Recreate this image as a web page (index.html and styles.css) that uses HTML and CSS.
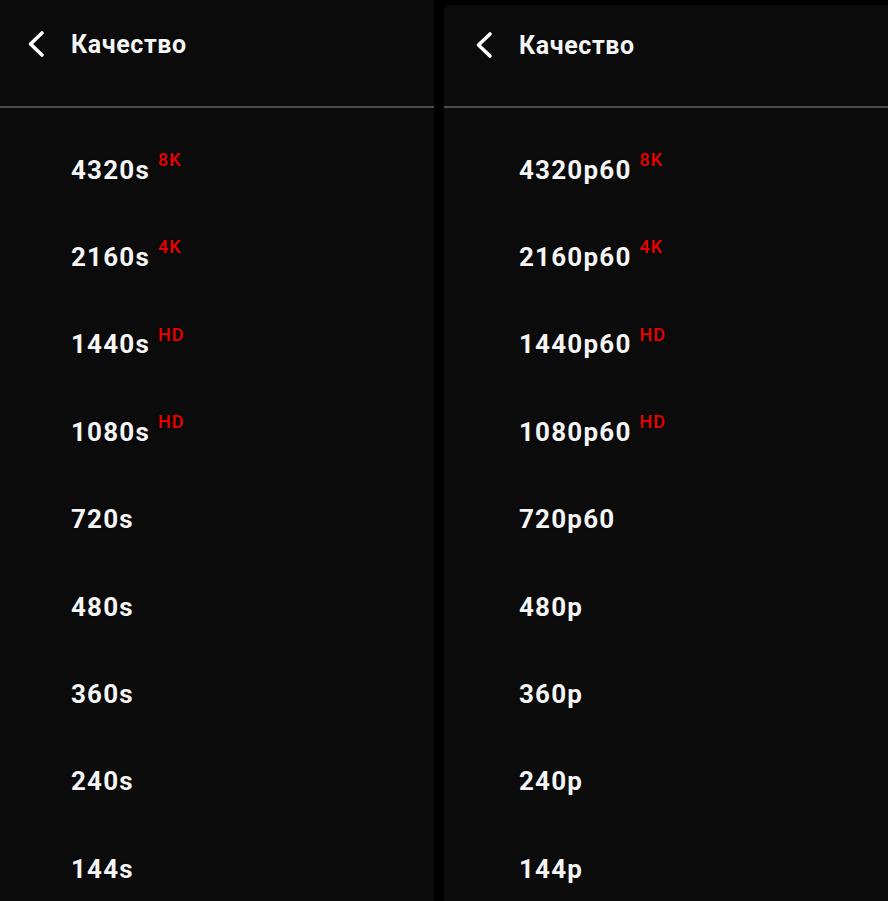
FILE: index.html
```html
<!DOCTYPE html>
<html lang="ru">
<head>
<meta charset="utf-8">
<title>Качество</title>
<link rel="stylesheet" href="styles.css">
</head>
<body>
<div class="screen">
  <section class="panel panel-left">
    <header class="panel-head">
      <svg class="back" width="20" height="28" viewBox="0 0 20 28"><path d="M16 3 L4.5 14 L16 25" fill="none" stroke="#fff" stroke-width="3.6" stroke-linecap="round" stroke-linejoin="round"/></svg>
      <span class="title">Качество</span>
    </header>
    <ul class="list">
      <li class="item">4320s<sup class="badge">8K</sup></li>
      <li class="item">2160s<sup class="badge">4K</sup></li>
      <li class="item">1440s<sup class="badge">HD</sup></li>
      <li class="item">1080s<sup class="badge">HD</sup></li>
      <li class="item">720s</li>
      <li class="item">480s</li>
      <li class="item">360s</li>
      <li class="item">240s</li>
      <li class="item">144s</li>
    </ul>
  </section>
  <section class="panel panel-right">
    <header class="panel-head">
      <svg class="back" width="20" height="28" viewBox="0 0 20 28"><path d="M16 3 L4.5 14 L16 25" fill="none" stroke="#fff" stroke-width="3.6" stroke-linecap="round" stroke-linejoin="round"/></svg>
      <span class="title">Качество</span>
    </header>
    <ul class="list">
      <li class="item">4320p60<sup class="badge">8K</sup></li>
      <li class="item">2160p60<sup class="badge">4K</sup></li>
      <li class="item">1440p60<sup class="badge">HD</sup></li>
      <li class="item">1080p60<sup class="badge">HD</sup></li>
      <li class="item">720p60</li>
      <li class="item">480p</li>
      <li class="item">360p</li>
      <li class="item">240p</li>
      <li class="item">144p</li>
    </ul>
  </section>
</div>
</body>
</html>
```
FILE: styles.css
```css
* { box-sizing: border-box; }
html, body {
  margin: 0;
  padding: 0;
  background: #000;
  width: 888px;
  height: 901px;
  overflow: hidden;
}
body {
  font-family: Roboto, "Liberation Sans", sans-serif;
  color: #f5f5f5;
}
.screen {
  display: flex;
  gap: 10px;
  height: 901px;
}
.panel {
  background: #0b0b0b;
  display: flex;
  flex-direction: column;
}
.panel-left {
  width: 434px;
}
.panel-right {
  width: 444px;
  margin-top: 5px;
  border-top-left-radius: 5px;
}
.panel-head {
  flex: none;
  display: flex;
  align-items: center;
  height: 108px;
  border-bottom: 2px solid #4d4d4d;
  padding-left: 26px;
  padding-bottom: 18px;
}
.panel-right .panel-head { height: 103px; padding-bottom: 21px; padding-left: 30px; }
.title {
  margin-left: 25px;
  font-size: 25px;
  font-weight: 700;
  letter-spacing: 0.6px;
  text-shadow: 0 0 2px rgba(0,0,0,0.8);
}
.list {
  flex: none;
  list-style: none;
  margin: 0;
  padding: 18px 0 0 71px;
}
.panel-right .list { padding-left: 75px; }
.item {
  height: 87.4px;
  display: flex;
  align-items: center;
  font-size: 26px;
  font-weight: 700;
  letter-spacing: 1.2px;
  text-shadow: 0 0 2px rgba(0,0,0,0.8);
}
.badge {
  align-self: flex-start;
  margin-top: 25px;
  margin-left: 8px;
  font-size: 18px;
  font-weight: 500;
  color: #ee0000;
  letter-spacing: 1px;
  line-height: 1;
}
```
